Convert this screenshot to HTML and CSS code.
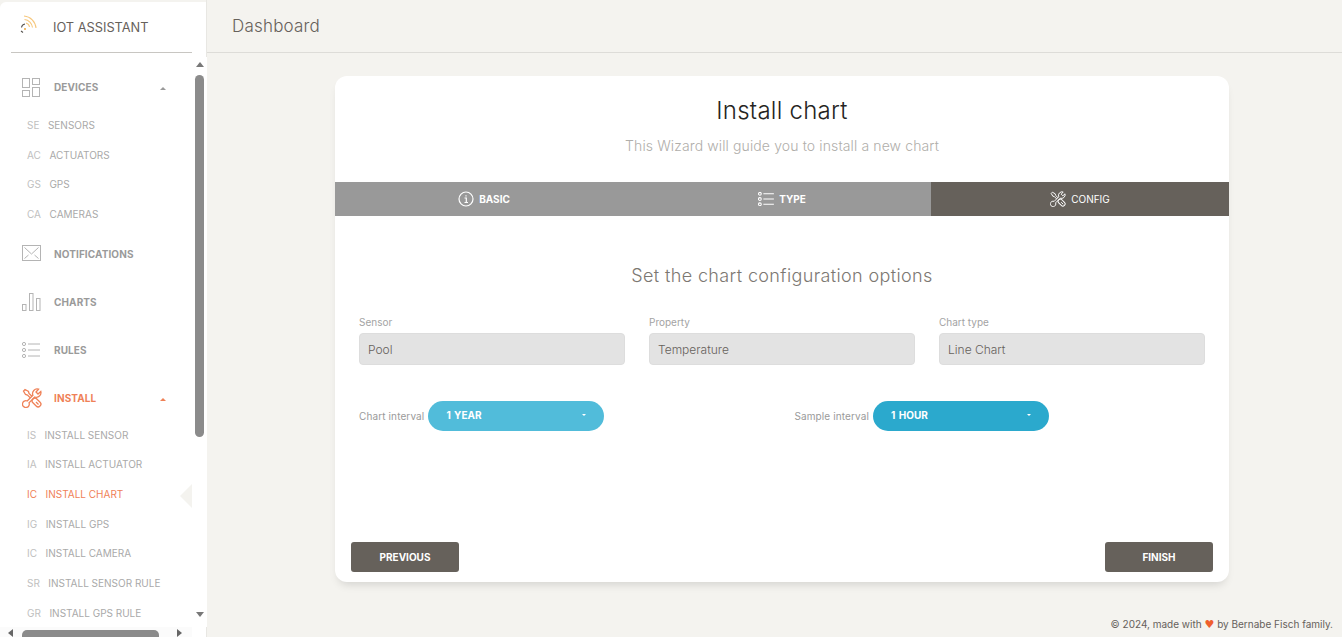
FILE: index.html
```html
<!DOCTYPE html>
<html lang="en">
<head>
    <meta charset="UTF-8">
    <meta name="viewport" content="width=device-width, initial-scale=1.0">
    <title>IoT Assistant - Install chart</title>
    <link rel="stylesheet" href="styles.css">
</head>
<body>
    <svg class="icon-defs" width="0" height="0">
        <symbol id="i-tools" viewBox="0 0 20 20">
            <path d="M8.300 9.900 5.500 7 3.500 6.500 1.500 3 3 1.500 6.500 3.500 7 5.500 9.900 8.300"/>
            <rect x="9.500" y="11.750" width="10" height="5.500" rx="2.700" transform="rotate(45 14.500 14.500)"/>
            <path d="m14 14 2.500 2.500"/>
            <path d="M16.500 1.200 14 4l2 2 2.800-2.500A4.600 4.600 0 0 1 12.800 9L7 14.800A3.400 3.400 0 1 1 5.200 13l5.700-5.700A4.600 4.600 0 0 1 16.500 1.200Z"/>
        </symbol>
        <symbol id="i-list" viewBox="0 0 18 16">
            <circle cx="2" cy="2" r="1.600"/>
            <circle cx="2" cy="8" r="1.600"/>
            <circle cx="2" cy="14" r="1.600"/>
            <path d="M6 2h12M6 8h12M6 14h12"/>
        </symbol>
    </svg>

    <aside class="sidebar">
        <div class="brand">
            <svg class="brand-logo" viewBox="0 0 18 20" width="18" height="20">
                <path class="wave" d="M5 2a13 13 0 0 1 12 12"/>
                <path class="wave" d="M5.500 5.500a9 9 0 0 1 8 8"/>
                <path class="wave" d="M7 9a5 5 0 0 1 3.500 4"/>
                <circle class="spot" cx="6" cy="15" r="1"/>
                <path class="dash" d="M2.500 13.500a4 4 0 0 1 3.500-3.500M2 17l2 1.500"/>
            </svg>
            <span class="brand-name">IOT ASSISTANT</span>
        </div>

        <nav class="side-nav">
            <a class="group">
                <svg class="group-icon" viewBox="0 0 18 19" width="18" height="19">
                    <rect x=".5" y=".5" width="7" height="9"/>
                    <rect x=".5" y="12.500" width="7" height="6"/>
                    <rect x="10.500" y=".5" width="7" height="6"/>
                    <rect x="10.500" y="9.500" width="7" height="9"/>
                </svg>
                <span class="group-name">DEVICES</span>
                <span class="caret"></span>
            </a>
            <ul class="sub-list">
                <li><span class="abbr">SE</span>SENSORS</li>
                <li><span class="abbr">AC</span>ACTUATORS</li>
                <li><span class="abbr">GS</span>GPS</li>
                <li><span class="abbr">CA</span>CAMERAS</li>
            </ul>

            <a class="group">
                <svg class="group-icon" viewBox="0 0 19 18" width="19" height="18">
                    <rect x=".5" y=".5" width="18" height="15"/>
                    <path d="m2.500 2.500 7 6.500 7-6.500M2.500 13.500l4-3.500M16.500 13.500l-4-3.500"/>
                </svg>
                <span class="group-name">NOTIFICATIONS</span>
            </a>
            <a class="group">
                <svg class="group-icon" viewBox="0 0 19 18" width="19" height="18">
                    <rect x=".5" y="11.500" width="3.500" height="6"/>
                    <rect x="7.500" y=".5" width="3.500" height="17"/>
                    <rect x="14.500" y="5.500" width="3.500" height="12"/>
                </svg>
                <span class="group-name">CHARTS</span>
            </a>
            <a class="group">
                <svg class="group-icon" width="18" height="16"><use href="#i-list"/></svg>
                <span class="group-name">RULES</span>
            </a>
            <a class="group group-active">
                <svg class="group-icon" width="20" height="20"><use href="#i-tools"/></svg>
                <span class="group-name">INSTALL</span>
                <span class="caret"></span>
            </a>
            <ul class="sub-list">
                <li><span class="abbr">IS</span>INSTALL SENSOR</li>
                <li><span class="abbr">IA</span>INSTALL ACTUATOR</li>
                <li class="current"><span class="abbr">IC</span>INSTALL CHART</li>
                <li><span class="abbr">IG</span>INSTALL GPS</li>
                <li><span class="abbr">IC</span>INSTALL CAMERA</li>
                <li><span class="abbr">SR</span>INSTALL SENSOR RULE</li>
                <li><span class="abbr">GR</span>INSTALL GPS RULE</li>
            </ul>

            <div class="vbar">
                <span class="arrow arrow-up"></span>
                <span class="vthumb"></span>
                <span class="arrow arrow-down"></span>
            </div>
            <div class="hbar">
                <span class="arrow arrow-left"></span>
                <span class="hthumb"></span>
                <span class="arrow arrow-right"></span>
            </div>
        </nav>
    </aside>

    <div class="main">
        <header class="topbar">Dashboard</header>

        <div class="content">
            <section class="wizard">
                <div class="wizard-head">
                    <h2>Install chart</h2>
                    <p>This Wizard will guide you to install a new chart</p>
                </div>

                <div class="tabs">
                    <div class="tab">
                        <svg class="tab-icon" viewBox="0 0 16 16" width="16" height="16">
                            <circle cx="8" cy="8" r="7"/>
                            <path d="M6.500 7H8.300V11.500M6.500 11.500H10M8 4.200V5.400"/>
                        </svg>
                        BASIC
                    </div>
                    <div class="tab">
                        <svg class="tab-icon" width="16" height="14"><use href="#i-list"/></svg>
                        TYPE
                    </div>
                    <div class="tab tab-active">
                        <svg class="tab-icon" width="16" height="16"><use href="#i-tools"/></svg>
                        CONFIG
                    </div>
                </div>

                <div class="wizard-body">
                    <h3>Set the chart configuration options</h3>

                    <div class="fields">
                        <label class="field">Sensor<input type="text" value="Pool" disabled></label>
                        <label class="field">Property<input type="text" value="Temperature" disabled></label>
                        <label class="field">Chart type<input type="text" value="Line Chart" disabled></label>
                    </div>

                    <div class="intervals">
                        <div class="interval">
                            <span>Chart interval</span>
                            <button class="dropdown">1 YEAR<i></i></button>
                        </div>
                        <div class="interval">
                            <span>Sample interval</span>
                            <button class="dropdown dropdown-dark">1 HOUR<i></i></button>
                        </div>
                    </div>
                </div>

                <div class="wizard-foot">
                    <button class="btn">PREVIOUS</button>
                    <button class="btn">FINISH</button>
                </div>
            </section>
        </div>

        <footer class="footer">© 2024, made with <span class="heart">♥</span> by Bernabe Fisch family.</footer>
    </div>
</body>
</html>
```

FILE: styles.css
```css
/* Global */
* {
    box-sizing: border-box;
}

html, body {
    height: 100%;
    margin: 0;
    overflow: hidden;
}

body {
    display: flex;
    background-color: #f4f3ef;
    font-family: 'Inter', 'Liberation Sans', sans-serif;
    color: #66615b;
}

.icon-defs {
    position: absolute;
}

/* Sidebar */
.sidebar {
    flex: none;
    width: 207px;
    height: 635px;
    margin-top: 2px;
    background-color: #fff;
    border-top-left-radius: 6px;
}

.brand {
    display: flex;
    align-items: center;
    height: 51px;
    margin: 0 15px 0 11px;
    padding-left: 8px;
    border-bottom: 1px solid #c8c6c2;
}

.brand-logo {
    flex: none;
    margin-bottom: 6px;
    fill: none;
}

.wave {
    stroke: #f6c77c;
    stroke-width: 1.1;
}

.spot {
    fill: #f0a93c;
}

.dash {
    stroke: #55524e;
    stroke-width: 1.1;
}

.brand-name {
    margin-left: 16px;
    font-size: 12.800px;
    color: #66615b;
}

.side-nav {
    position: relative;
    height: 584px;
    padding-top: 10px;
    overflow: hidden;
}

/* Scrollbars, the screenshot shows them but headless chrome hides real ones */
.vbar {
    position: absolute;
    top: 4px;
    right: 0;
    display: flex;
    flex-direction: column;
    align-items: center;
    width: 15px;
    height: 570px;
    padding: 5px 0 10px;
    background-color: #fff;
}

.vthumb {
    width: 9px;
    height: 362px;
    margin-top: 8px;
    background-color: #8b8b8b;
    border-radius: 5px;
}

.hbar {
    position: absolute;
    left: 0;
    bottom: 0;
    display: flex;
    align-items: flex-end;
    width: 192px;
    height: 10px;
    padding: 0 10px 0 8px;
    background-color: #fbfbfb;
}

.hthumb {
    width: 137px;
    height: 7px;
    margin-left: 9px;
    background-color: #8b8b8b;
    border-radius: 5px 5px 0 0;
}

.arrow {
    width: 0;
    height: 0;
    border-style: solid;
    border-color: transparent;
}

.arrow-up {
    border-width: 0 4.500px 5px;
    border-bottom-color: #787878;
}

.arrow-down {
    margin-top: auto;
    border-width: 5px 4.500px 0;
    border-top-color: #787878;
}

.arrow-left {
    margin-bottom: .5px;
    border-width: 4.500px 5px 4.500px 0;
    border-right-color: #666;
}

.arrow-right {
    margin-left: auto;
    margin-bottom: .5px;
    border-width: 4.500px 0 4.500px 5px;
    border-left-color: #666;
}

.group {
    position: relative;
    display: flex;
    align-items: center;
    height: 48px;
    padding-left: 22px;
    font-size: 10px;
    font-weight: 700;
    color: #9a9a9a;
}

.group-icon {
    flex: none;
    fill: none;
    stroke: #b4b4b4;
    stroke-width: 1;
}

.group-name {
    position: absolute;
    left: 54px;
    letter-spacing: .1px;
}

.group-active {
    color: #ef8157;
}

.group-active .group-icon {
    stroke: #ef8157;
    stroke-width: 1.300;
}

.caret {
    position: absolute;
    left: 160px;
    width: 0;
    height: 0;
    margin-top: 3px;
    border-left: 3px solid transparent;
    border-right: 3px solid transparent;
    border-bottom: 3px solid currentColor;
}

.sub-list {
    margin: -1px 0 1px;
    padding: 0;
    list-style: none;
}

.group-active + .sub-list {
    margin-top: -2px;
}

.sub-list li {
    position: relative;
    display: flex;
    align-items: center;
    height: 29.700px;
    padding-left: 27px;
    font-size: 10px;
    color: #a9a9a9;
}

.abbr {
    margin-right: 8.500px;
    color: #c0c0c0;
}

.sub-list .current,
.sub-list .current .abbr {
    color: #ef8157;
}

/* little notch pointing at the current page */
.current::after {
    content: "";
    position: absolute;
    left: 180px;
    top: 5px;
    width: 0;
    height: 0;
    border-top: 12px solid transparent;
    border-bottom: 12px solid transparent;
    border-right: 12px solid #f4f3ef;
}

/* Main area */
.main {
    flex: 1;
    display: flex;
    flex-direction: column;
    min-width: 0;
    height: 637px;
    border-left: 1px solid #e8e7e3;
    margin-left: -1px;
}

.topbar {
    flex: none;
    height: 53px;
    padding: 16px 0 0 25px;
    border-bottom: 1px solid #dddcd8;
    font-size: 17px;
    font-weight: 300;
    line-height: 21px;
    letter-spacing: .2px;
    color: #66615b;
}

.content {
    flex: 1;
    padding: 23px 113px 0 128px;
}

/* Wizard card */
.wizard {
    display: flex;
    flex-direction: column;
    height: 506px;
    background-color: #fff;
    border-radius: 12px;
    box-shadow: 0 6px 10px -4px rgba(0, 0, 0, 0.15);
}

.wizard-head {
    height: 106px;
    padding-top: 21px;
    text-align: center;
}

.wizard-head h2 {
    margin: 0;
    font-size: 24px;
    font-weight: 300;
    line-height: 28px;
    letter-spacing: .25px;
    color: #252422;
}

.wizard-head p {
    margin: 13px 0 0;
    font-size: 14px;
    font-weight: 300;
    line-height: 16px;
    letter-spacing: .12px;
    color: #b0aeaa;
}

.tabs {
    display: grid;
    grid-template-columns: repeat(3, 1fr);
    height: 34px;
    background-color: #999;
}

.tab {
    display: flex;
    align-items: center;
    justify-content: center;
    gap: 5px;
    font-size: 10px;
    font-weight: 700;
    color: #fff;
}

.tab-icon {
    fill: none;
    stroke: #fff;
    stroke-width: 1.200;
}

.tab-active {
    background-color: #66615b;
    font-weight: 400;
}

.wizard-body {
    flex: 1;
    padding: 0 24px;
}

.wizard-body h3 {
    margin: 49px 0 0;
    font-size: 18px;
    font-weight: 300;
    line-height: 22px;
    letter-spacing: .37px;
    text-align: center;
    color: #7c7772;
}

.fields {
    display: grid;
    grid-template-columns: repeat(3, 266px);
    gap: 24px;
    margin-top: 29px;
}

.field {
    display: block;
    font-size: 10px;
    line-height: 12px;
    color: #a3a3a3;
}

.field input {
    display: block;
    width: 100%;
    height: 32px;
    margin-top: 5px;
    padding: 0 8px;
    background-color: #e3e3e3;
    border: 1px solid #ddd;
    border-radius: 4px;
    font-family: inherit;
    font-size: 12px;
    font-weight: 300;
    color: #66615b;
    -webkit-text-fill-color: #66615b;
    opacity: 1;
}

.intervals {
    display: flex;
    gap: 190px;
    margin-top: 36px;
}

.interval {
    display: flex;
    align-items: center;
    gap: 4px;
    font-size: 10px;
    letter-spacing: .12px;
    color: #9a9a9a;
}

.dropdown {
    display: flex;
    align-items: center;
    justify-content: space-between;
    width: 176px;
    height: 30px;
    padding: 0 18px 2px;
    background-color: #51bcda;
    border: none;
    border-radius: 15px;
    font-family: inherit;
    font-size: 10px;
    font-weight: 700;
    word-spacing: 1px;
    color: #fff;
}

.dropdown i {
    width: 0;
    height: 0;
    border-left: 2.500px solid transparent;
    border-right: 2.500px solid transparent;
    border-top: 2.500px solid #fff;
}

.dropdown-dark {
    background-color: #2ba9cd;
}

.wizard-foot {
    display: flex;
    justify-content: space-between;
    padding: 0 16px 10px;
}

.btn {
    width: 108px;
    height: 30px;
    padding-bottom: 2px;
    background-color: #66615b;
    border: none;
    border-radius: 3px;
    font-family: inherit;
    font-size: 10px;
    font-weight: 700;
    color: #fff;
}

.footer {
    flex: none;
    padding: 0 9px 7px 0;
    font-size: 10px;
    line-height: 12px;
    text-align: right;
    color: #66615b;
}

.heart {
    color: #ef5f2e;
    font-family: 'DejaVu Sans', sans-serif;
    font-size: 11px;
    line-height: 10px;
}
```
